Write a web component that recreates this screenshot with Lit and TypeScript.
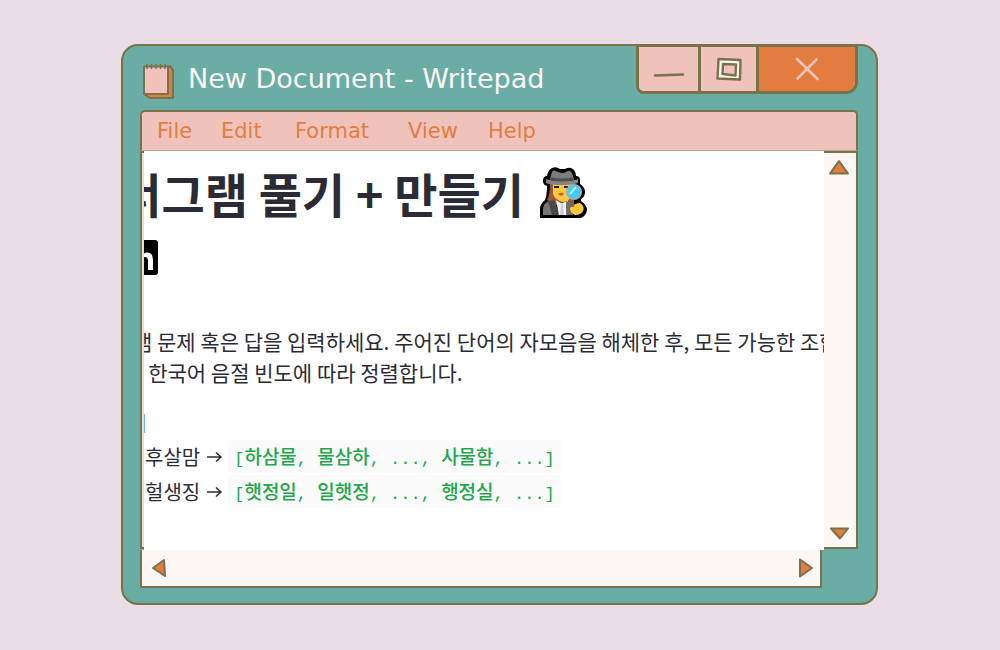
import { LitElement, html, css, svg } from "lit";
import { customElement } from "lit/decorators.js";

const notepadIcon = svg`
  <path d="M28 4 L31 8 V36 H8 L2 32 Z" fill="#e27d3f" stroke="#79724a" stroke-width="2" stroke-linejoin="round"/>
  <path d="M2 4.5 H26 V32 H2 Z" fill="#efc3bc" stroke="#79724a" stroke-width="2" stroke-linejoin="round"/>
  <path d="M5 2v5M9.500 2v5M14 2v5M18.500 2v5M23 2v5" stroke="#79724a" stroke-width="1.5"/>`;

const detectiveIcon = svg`
  <path d="M8 9 Q9 3 13 1 Q17 -1 21 2 H26 Q31 -1 35 3 Q37 6 37 9 Q41 9 41 13 V17 Q46 20 46 25 Q46 30 42 32 V34 Q48 38 48 43 Q47 49 42 51 H1 V42 Q1 37 6 33 Q8 28 8 19 Q4 18 4 14 Q4 9 8 9 Z" fill="#000"/>
  <path d="M11 17 Q11 28 8 33 L16 38 H30 L35 32 V17 Z" fill="#96593a"/>
  <path d="M14 17 H33 V27 Q31 34 24 35 Q16 33 14 27 Z" fill="#ffc83d"/>
  <path d="M11 11 L13 5 Q15 2 19 5 Q23 7 27 5 Q31 2 33 6 L35 12 H11 Z" fill="#7c7c7c"/>
  <path d="M7 12 Q12 14 23 14 Q34 14 39 12 V16 Q33 18 23 18 Q12 18 7 16 Z" fill="#858585"/>
  <path d="M11 10 Q23 13 35 10 V13 Q23 16 11 13 Z" fill="#505050"/>
  <path d="M15 19h5v2h-5zM25 19h4v2h-4z" fill="#222"/>
  <path d="M19 27 Q22 25 25 27 Q22 30 19 27Z" fill="#e8432e"/>
  <path d="M4 48 V42 Q4 36 12 33 L19 48 Z" fill="#777"/>
  <path d="M9 34 L15 33 L21 48 H13 Z" fill="#494949"/>
  <path d="M17 33 L23 37 L29 33 L28 48 H20 Z" fill="#f3f3f6"/>
  <path d="M22 36 L24 36 L25 48 H21 Z" fill="#c9ccd4"/>
  <path d="M27 34 L33 36 L34 48 H27 Z" fill="#6e6e6e"/>
  <path d="M31 41 Q36 36 41 36 Q46 39 44 44 Q42 48 36 48 Q31 46 31 41Z" fill="#ffc83d"/>
  <path d="M32 32h3v8h-3z" fill="#9a5b3a"/>
  <circle cx="35" cy="25" r="8" fill="#8fb3c4"/>
  <circle cx="35" cy="25" r="6" fill="#43cdf4"/>
  <path d="M31 27 L37 20" stroke="#a8ecff" stroke-width="2"/>`;

@customElement("app-root")
export class AppRoot extends LitElement {
  static styles = css`
    :host {
      --olive: #79724a;
      --teal: #6aada4;
      --pink: #efc3bc;
      --orange: #e27d3f;
      --cream: #fcf6f5;
      display: flex;
      box-sizing: border-box;
      min-height: 100vh;
      padding: 44px 122px 45px 121px;
      background: #eadde6;
      font-family: "Noto Sans CJK KR", sans-serif;
    }
    svg { display: block; }
    .window {
      flex: 1;
      min-width: 0;
      display: flex;
      flex-direction: column;
      box-sizing: border-box;
      border: 2px solid var(--olive);
      border-radius: 17px;
      background: var(--teal);
      padding: 0 18px 15px 17px;
    }
    .titlebar {
      display: flex;
      height: 64px;
      align-items: flex-start;
      gap: 12px;
      padding-left: 2px;
    }
    .app-icon { margin-top: 16px; }
    h1 {
      flex: 1;
      margin: 0;
      padding-top: 14px;
      font: 400 27px/38px "DejaVu Sans", sans-serif;
      color: var(--cream);
      white-space: nowrap;
    }
    .controls {
      display: flex;
      margin-top: -2px;
      height: 50px;
      box-sizing: border-box;
      border: 3px solid var(--olive);
      border-radius: 2px 2px 12px 8px;
      overflow: hidden;
      background: var(--pink);
    }
    .controls button {
      display: flex;
      align-items: center;
      justify-content: center;
      width: 58px;
      padding: 0;
      border: 0;
      border-right: 3px solid var(--olive);
      background: var(--pink);
    }
    .controls .minimize { width: 62px; }
    .controls .close { width: 96px; border: 0; background: var(--orange); }
    .menu {
      display: grid;
      grid-template-columns: 64px 74px 113px 80px auto;
      justify-content: start;
      align-items: center;
      box-sizing: border-box;
      height: 41px;
      padding-left: 15px;
      border: 2px solid var(--olive);
      border-bottom: 1px solid #b9a791;
      border-radius: 5px 5px 0 0;
      background: var(--pink);
    }
    .menu button {
      padding: 0;
      border: 0;
      background: none;
      text-align: left;
      font: 400 21px/30px "DejaVu Sans", sans-serif;
      color: var(--orange);
    }
    .body {
      flex: 1;
      display: grid;
      grid-template-columns: 4px minmax(0, 1fr) 34px;
      grid-template-rows: minmax(0, 1fr) 38px;
    }
    .edge {
      border: 2px solid var(--olive);
      border-right: 0;
      margin-bottom: 1px;
      background: #eadde6;
    }
    .page {
      overflow: hidden;
      background: #fff;
      color: #2b2b35;
      white-space: nowrap;
    }
    .scrolled { margin-left: -69px; padding-top: 8px; }
    h2 {
      display: flex;
      align-items: center;
      gap: 15px;
      margin: 0;
      font-size: 47px;
      font-weight: 700;
      line-height: 68px;
    }
    .badge { display: block; width: 35px; margin: 13px 0 0 48px; }
    .page p { margin: 51px 0 0; font-size: 21px; line-height: 31px; }
    .page .label { width: 72px; margin-top: 19px; text-align: right; }
    ul { list-style: none; margin: 1px 0 0; padding: 0 0 0 70px; }
    li {
      display: flex;
      align-items: center;
      gap: 5px;
      height: 35px;
      font-size: 20px;
    }
    code {
      padding: 4px 6px 0;
      border-radius: 4px;
      background: #fafafa;
      color: #21a84a;
      font: 400 17px/26px "Liberation Mono", monospace;
      white-space: pre;
    }
    .ko {
      font: 500 19px/24px "Noto Sans CJK KR", sans-serif;
    }
    .vbar, .hbar {
      display: flex;
      justify-content: space-between;
      align-items: center;
      box-sizing: border-box;
      border: 2px solid var(--olive);
      background: var(--cream);
    }
    .vbar {
      flex-direction: column;
      align-items: flex-start;
      border-left: 0;
      margin-bottom: 1px;
      padding: 5px 0 3px 5px;
    }
    .hbar {
      grid-column: 1 / 3;
      border-top: 0;
      margin-right: 2px;
      padding: 0 6px 0 9px;
    }
    .bar-button { padding: 0; border: 0; background: none; }
  `;

  private arrow(label: string, points: string) {
    return html`<button class="bar-button" aria-label=${label}>
      <svg width="20" height="20" viewBox="0 0 20 20">
        <polygon points=${points} fill="#e27d3f" stroke="#79724a" stroke-width="2" stroke-linejoin="round"/>
      </svg></button>`;
  }

  private example(word: string, parts: string[]) {
    return html`<li><span>${word}</span><svg width="18" height="16" viewBox="0 0 18 16" aria-label="→"><path d="M2 8H16M11 3.5L16 8L11 12.5" fill="none" stroke="#2b2b35" stroke-width="1.5"/></svg><code>[<span class="ko">${parts[0]}</span>, <span class="ko">${parts[1]}</span>, ..., <span class="ko">${parts[2]}</span>, ...]</code></li>`;
  }

  render() {
    return html`
      <main class="window">
        <header class="titlebar">
          <svg class="app-icon" width="34" height="38" viewBox="0 0 34 38">${notepadIcon}</svg>
          <h1>New Document - Writepad</h1>
          <div class="controls">
            <button class="minimize" aria-label="Minimize">
              <svg width="32" height="20" viewBox="0 0 32 20"><path d="M2 16.500L30 15.500" stroke="#79724a" stroke-width="2.6" stroke-linecap="round"/></svg>
            </button>
            <button aria-label="Maximize">
              <svg width="28" height="26" viewBox="0 0 28 26">
                <path d="M3.500 3L25.500 4L25 23.500L2.500 22.500Z" fill="#fcf6f5" stroke="#79724a" stroke-width="2.4" stroke-linejoin="round"/>
                <path d="M8 8L21 8.500L20.500 19.500L7.500 18Z" fill="#efc3bc" stroke="#79724a" stroke-width="2.4" stroke-linejoin="round"/>
              </svg>
            </button>
            <button class="close" aria-label="Close">
              <svg width="26" height="26" viewBox="0 0 26 26"><path d="M3 3L23.500 23M22.500 3.500L3.500 22.500" stroke="#efc3bc" stroke-width="2.6" stroke-linecap="round"/></svg>
            </button>
          </div>
        </header>
        <nav class="menu">
          ${["File", "Edit", "Format", "View", "Help"].map((name) => html`<button>${name}</button>`)}
        </nav>
        <div class="body">
          <div class="edge"></div>
          <article class="page">
            <div class="scrolled">
              <h2>
                <span>애너그램 풀기 + 만들기</span>
                <svg width="50" height="52" viewBox="0 0 50 52">${detectiveIcon}</svg>
              </h2>
              <a class="badge" href="#" aria-label="LinkedIn">
                <svg width="35" height="35" viewBox="0 0 35 35">
                  <rect width="35" height="35" rx="3" fill="#000"/>
                  <path d="M5 13h5v17H5zM5 5h5v5H5z" fill="#fff"/>
                  <path d="M14 13h5v2.500Q21 12.500 24.500 12.500Q30 12.500 30 20V30H25V21Q25 17 22 17Q19 17 19 21V30H14Z" fill="#fff"/>
                </svg>
              </a>
              <p>애너그램 문제 혹은 답을 입력하세요. 주어진 단어의 자모음을 해체한 후, 모든 가능한 조합을<br>만든 뒤, 한국어 음절 빈도에 따라 정렬합니다.</p>
              <p class="label">예시</p>
              <ul>
                ${this.example("후살맘", ["하삼물", "물삼하", "사물함"])}
                ${this.example("헐생징", ["햇정일", "일햇정", "행정실"])}
              </ul>
            </div>
          </article>
          <div class="vbar">
            ${this.arrow("Scroll up", "10,3 19,15.500 1,15.500")}
            ${this.arrow("Scroll down", "2,4.500 19,4.500 11,14.500")}
          </div>
          <div class="hbar">
            ${this.arrow("Scroll left", "2,10 13,2 14,18")}
            ${this.arrow("Scroll right", "6,1.500 18,10 6,18.500")}
          </div>
        </div>
      </main>`;
  }
}
